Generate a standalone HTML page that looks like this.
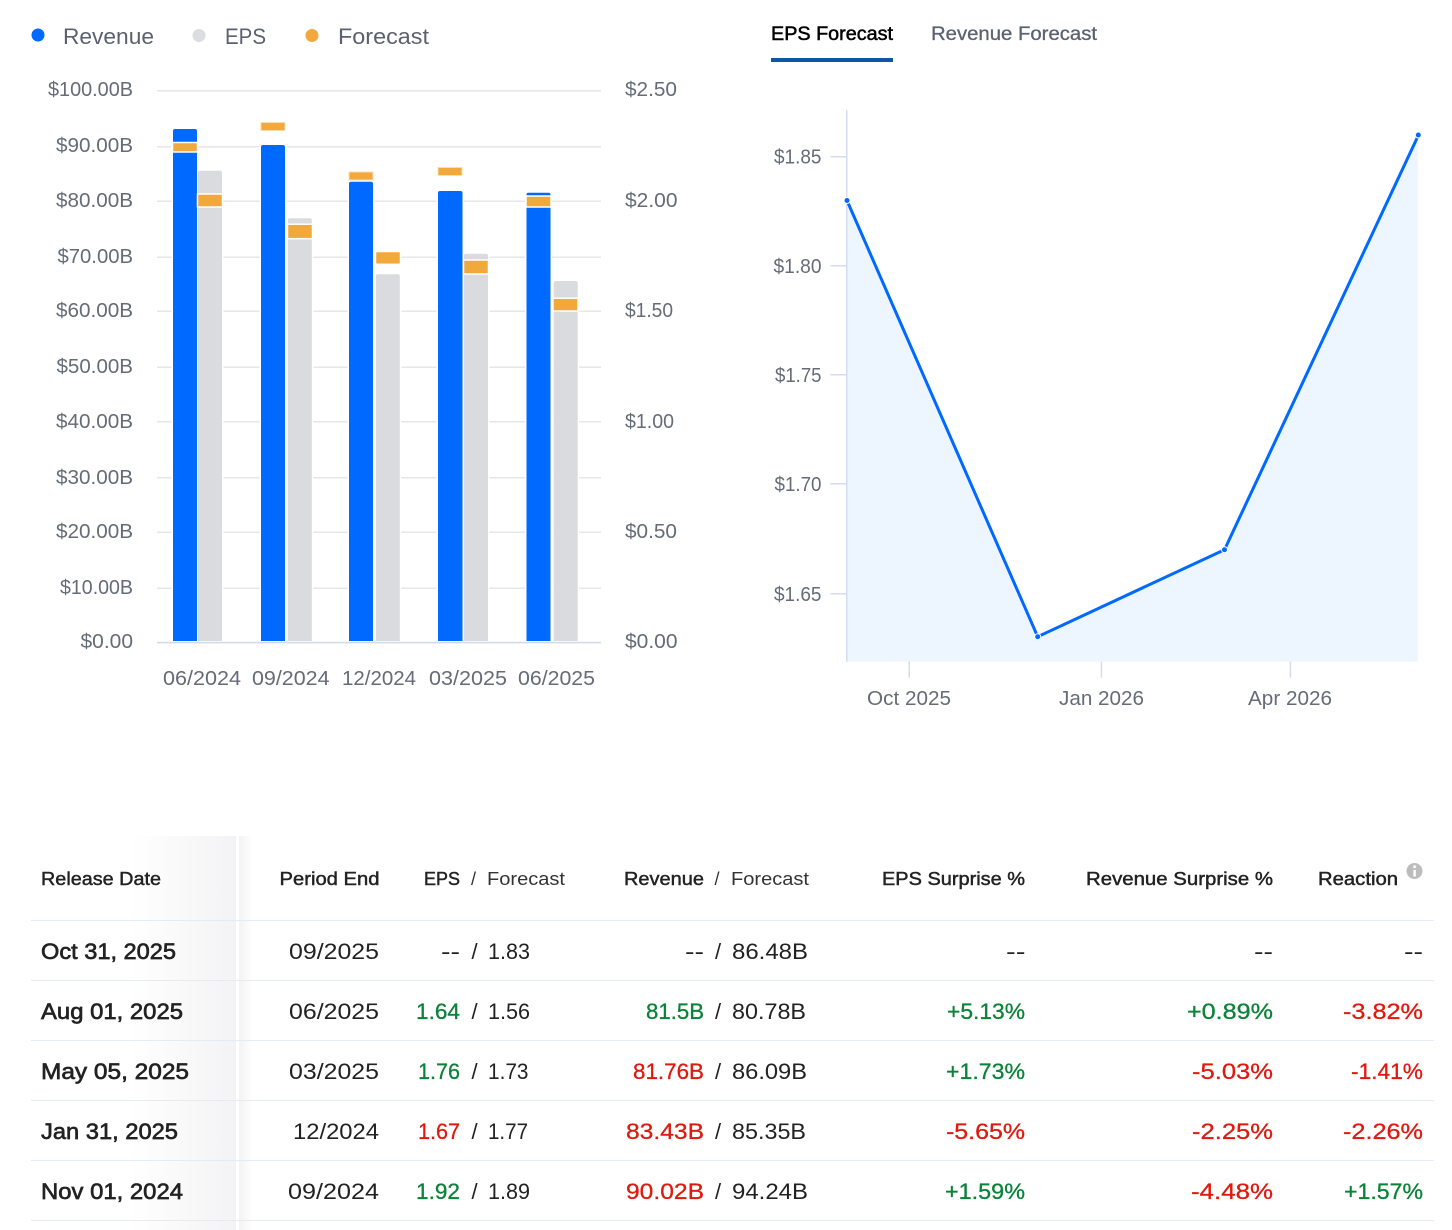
<!DOCTYPE html>
<html><head><meta charset="utf-8"><style>
html,body{margin:0;padding:0;background:#fff}
svg{display:block}
text{font-family:"Liberation Sans",sans-serif}
.a{font-size:20px;fill:#666b78}
.l{font-size:22px;fill:#5b6170}
.h{font-size:18px;fill:#222;stroke:#222;stroke-width:.45}
.hf{font-size:18px;fill:#333}
.d{font-size:22px;fill:#222;stroke:#222;stroke-width:.65}
.n{font-size:22px;fill:#222}
.g{font-size:22px;fill:#0a8238;stroke:#0a8238;stroke-width:.3}
.r{font-size:22px;fill:#e0190f;stroke:#e0190f;stroke-width:.3}
</style></head><body>
<svg width="1452" height="1230" viewBox="0 0 1452 1230" xmlns="http://www.w3.org/2000/svg">
<defs>
<linearGradient id="s1" x1="0" x2="1" y1="0" y2="0"><stop offset="0" stop-color="#fff"/><stop offset="1" stop-color="#f3f3f5"/></linearGradient>
<linearGradient id="s2" x1="0" x2="1" y1="0" y2="0"><stop offset="0" stop-color="#f3f3f5"/><stop offset="1" stop-color="#fff"/></linearGradient>
</defs>
<rect width="1452" height="1230" fill="#fff"/>

<!-- legend -->
<circle cx="38" cy="35" r="6.5" fill="#0069ff"/>
<text class="l" x="63" y="44" textLength="91" lengthAdjust="spacingAndGlyphs">Revenue</text>
<circle cx="199" cy="35.500" r="6.500" fill="#dcdde1"/>
<text class="l" x="225" y="44" textLength="41" lengthAdjust="spacingAndGlyphs">EPS</text>
<circle cx="312" cy="35.500" r="6.500" fill="#f2a93b"/>
<text class="l" x="338" y="44" textLength="91" lengthAdjust="spacingAndGlyphs">Forecast</text>

<!-- grid -->
<g fill="#e7e7e9">
<rect x="157" y="90" width="444" height="1.500"/>
<rect x="157" y="146" width="444" height="1.500"/>
<rect x="157" y="200.500" width="444" height="1.500"/>
<rect x="157" y="256.500" width="444" height="1.500"/>
<rect x="157" y="310.500" width="444" height="1.500"/>
<rect x="157" y="366.500" width="444" height="1.500"/>
<rect x="157" y="421" width="444" height="1.500"/>
<rect x="157" y="477" width="444" height="1.500"/>
<rect x="157" y="531.500" width="444" height="1.500"/>
<rect x="157" y="587.500" width="444" height="1.500"/>
</g>
<rect x="157" y="641.800" width="444" height="1.600" fill="#d0d9ee"/>

<!-- halos -->
<g fill="#fff">
<rect x="171.500" y="127.500" width="27" height="514"/>
<rect x="196.500" y="169" width="27" height="472.500"/>
<rect x="259.500" y="143.500" width="27" height="498"/>
<rect x="286.300" y="216.800" width="27" height="424.700"/>
<rect x="347.500" y="180" width="27" height="461.500"/>
<rect x="374.300" y="250" width="27" height="391.500"/>
<rect x="436.500" y="189.500" width="27.500" height="452"/>
<rect x="462.500" y="252" width="27" height="389.500"/>
<rect x="525" y="191" width="27" height="450.500"/>
<rect x="552.200" y="279.500" width="27" height="362"/>
</g>
<!-- blue bars -->
<g fill="#0069ff">
<path d="M173 641V131a2 2 0 0 1 2-2h20a2 2 0 0 1 2 2V641z"/>
<path d="M261 641V147a2 2 0 0 1 2-2h20a2 2 0 0 1 2 2V641z"/>
<path d="M349 641V183.700a2 2 0 0 1 2-2h20a2 2 0 0 1 2 2V641z"/>
<path d="M438 641V193a2 2 0 0 1 2-2h20.500a2 2 0 0 1 2 2V641z"/>
<path d="M526.500 641V194.700a2 2 0 0 1 2-2h20a2 2 0 0 1 2 2V641z"/>
</g>
<!-- gray bars -->
<g fill="#dadbdf">
<path d="M198 641V172.700a2 2 0 0 1 2-2h20a2 2 0 0 1 2 2V641z"/>
<path d="M287.800 641V220.300a2 2 0 0 1 2-2h20a2 2 0 0 1 2 2V641z"/>
<path d="M375.800 641V276.300a2 2 0 0 1 2-2h20a2 2 0 0 1 2 2V641z"/>
<path d="M464 641V255.700a2 2 0 0 1 2-2h20a2 2 0 0 1 2 2V641z"/>
<path d="M553.700 641V283a2 2 0 0 1 2-2h20a2 2 0 0 1 2 2V641z"/>
</g>
<!-- forecast -->
<g fill="#f2a93b" stroke="#fff" stroke-width="1.500">
<rect x="172.500" y="142.500" width="25" height="9.500"/>
<rect x="197.500" y="194" width="25" height="13"/>
<rect x="287.500" y="224.200" width="25" height="14.500"/>
<rect x="375.500" y="251.500" width="25" height="12.800"/>
<rect x="463.500" y="260" width="25" height="14"/>
<rect x="526" y="196" width="25" height="11"/>
<rect x="553" y="298.200" width="25" height="12.800"/>
</g>
<g fill="#f2a93b" stroke="#fbdcae" stroke-width="1">
<rect x="261" y="122.500" width="24" height="8"/>
<rect x="349" y="172" width="24" height="8"/>
<rect x="438" y="167.500" width="24" height="8"/>
</g>

<!-- left axis -->
<text class="a" x="48" y="96" textLength="85" lengthAdjust="spacingAndGlyphs">$100.00B</text>
<text class="a" x="56" y="152" textLength="77" lengthAdjust="spacingAndGlyphs">$90.00B</text>
<text class="a" x="56" y="207" textLength="77" lengthAdjust="spacingAndGlyphs">$80.00B</text>
<text class="a" x="57.500" y="263" textLength="75.500" lengthAdjust="spacingAndGlyphs">$70.00B</text>
<text class="a" x="56" y="317" textLength="77" lengthAdjust="spacingAndGlyphs">$60.00B</text>
<text class="a" x="56.500" y="373" textLength="76.500" lengthAdjust="spacingAndGlyphs">$50.00B</text>
<text class="a" x="56" y="428" textLength="77" lengthAdjust="spacingAndGlyphs">$40.00B</text>
<text class="a" x="56" y="484" textLength="77" lengthAdjust="spacingAndGlyphs">$30.00B</text>
<text class="a" x="56" y="538" textLength="77" lengthAdjust="spacingAndGlyphs">$20.00B</text>
<text class="a" x="60" y="594" textLength="73" lengthAdjust="spacingAndGlyphs">$10.00B</text>
<text class="a" x="80.500" y="648" textLength="52.500" lengthAdjust="spacingAndGlyphs">$0.00</text>
<!-- right axis -->
<text class="a" x="625" y="96" textLength="52" lengthAdjust="spacingAndGlyphs">$2.50</text>
<text class="a" x="625" y="207" textLength="52.500" lengthAdjust="spacingAndGlyphs">$2.00</text>
<text class="a" x="625" y="317" textLength="48" lengthAdjust="spacingAndGlyphs">$1.50</text>
<text class="a" x="625" y="428" textLength="49" lengthAdjust="spacingAndGlyphs">$1.00</text>
<text class="a" x="625" y="538" textLength="52" lengthAdjust="spacingAndGlyphs">$0.50</text>
<text class="a" x="625" y="648" textLength="52.500" lengthAdjust="spacingAndGlyphs">$0.00</text>
<!-- x labels -->
<text class="a" x="163" y="685" textLength="78" lengthAdjust="spacingAndGlyphs">06/2024</text>
<text class="a" x="252" y="685" textLength="77.500" lengthAdjust="spacingAndGlyphs">09/2024</text>
<text class="a" x="342" y="685" textLength="74" lengthAdjust="spacingAndGlyphs">12/2024</text>
<text class="a" x="429" y="685" textLength="78" lengthAdjust="spacingAndGlyphs">03/2025</text>
<text class="a" x="518" y="685" textLength="77" lengthAdjust="spacingAndGlyphs">06/2025</text>

<!-- tabs -->
<text x="771" y="40" font-size="19" fill="#000" stroke="#000" stroke-width=".5" textLength="122" lengthAdjust="spacingAndGlyphs">EPS Forecast</text>
<text x="931" y="40" font-size="19" fill="#5b6170" stroke="#5b6170" stroke-width=".3" textLength="166" lengthAdjust="spacingAndGlyphs">Revenue Forecast</text>
<rect x="771" y="58" width="122" height="4" fill="#0e57a6"/>

<!-- forecast chart -->
<path d="M846.500 200.500L1037.700 636.700L1224.500 549.700L1417.700 135V661.700H846.500Z" fill="#edf5ff"/>
<rect x="846" y="110" width="1.500" height="551.700" fill="#d5dcee"/>
<g fill="#d5dcee">
<rect x="830.500" y="156" width="16" height="1.500"/>
<rect x="830.500" y="265" width="16" height="1.500"/>
<rect x="830.500" y="374" width="16" height="1.500"/>
<rect x="830.500" y="483" width="16" height="1.500"/>
<rect x="830.500" y="593" width="16" height="1.500"/>
<rect x="908.500" y="661.700" width="1.500" height="16"/>
<rect x="1100.700" y="661.700" width="1.500" height="16"/>
<rect x="1289.700" y="661.700" width="1.500" height="16"/>
</g>
<path d="M847 200.500L1037.700 636.700L1224.500 549.700L1418.500 135" fill="none" stroke="#0069ff" stroke-width="3" stroke-linejoin="miter"/>
<g fill="#0069ff" stroke="#fff" stroke-width="1">
<circle cx="847" cy="200.500" r="3"/>
<circle cx="1037.700" cy="636.700" r="3"/>
<circle cx="1224.500" cy="549.700" r="3"/>
<circle cx="1418.300" cy="135" r="3"/>
</g>
<text class="a" x="774" y="163.500" textLength="47.500" lengthAdjust="spacingAndGlyphs">$1.85</text>
<text class="a" x="773.500" y="273" textLength="48" lengthAdjust="spacingAndGlyphs">$1.80</text>
<text class="a" x="775" y="382" textLength="46.500" lengthAdjust="spacingAndGlyphs">$1.75</text>
<text class="a" x="774.500" y="491" textLength="47" lengthAdjust="spacingAndGlyphs">$1.70</text>
<text class="a" x="774" y="601" textLength="47.500" lengthAdjust="spacingAndGlyphs">$1.65</text>
<text class="a" x="867" y="705" textLength="84" lengthAdjust="spacingAndGlyphs">Oct 2025</text>
<text class="a" x="1059" y="705" textLength="85" lengthAdjust="spacingAndGlyphs">Jan 2026</text>
<text class="a" x="1248" y="705" textLength="84" lengthAdjust="spacingAndGlyphs">Apr 2026</text>

<!-- table sticky shading -->
<rect x="130" y="836" width="106" height="394" fill="url(#s1)"/>
<rect x="239" y="836" width="14" height="394" fill="url(#s2)"/>
<g fill="#e5ebf4">
<rect x="31" y="920" width="1403" height="1"/>
<rect x="31" y="980" width="1403" height="1"/>
<rect x="31" y="1040" width="1403" height="1"/>
<rect x="31" y="1100" width="1403" height="1"/>
<rect x="31" y="1160" width="1403" height="1"/>
<rect x="31" y="1220" width="1403" height="1"/>
</g>

<!-- table header -->
<text class="h" x="41" y="885" textLength="120" lengthAdjust="spacingAndGlyphs">Release Date</text>
<text class="h" x="279.500" y="885" textLength="100" lengthAdjust="spacingAndGlyphs">Period End</text>
<text class="h" x="424" y="885" textLength="36" lengthAdjust="spacingAndGlyphs">EPS</text>
<text class="hf" x="471" y="885">/</text>
<text class="hf" x="487" y="885" textLength="78" lengthAdjust="spacingAndGlyphs">Forecast</text>
<text class="h" x="624" y="885" textLength="80" lengthAdjust="spacingAndGlyphs">Revenue</text>
<text class="hf" x="714.500" y="885">/</text>
<text class="hf" x="731" y="885" textLength="78" lengthAdjust="spacingAndGlyphs">Forecast</text>
<text class="h" x="882" y="885" textLength="143" lengthAdjust="spacingAndGlyphs">EPS Surprise %</text>
<text class="h" x="1086" y="885" textLength="187" lengthAdjust="spacingAndGlyphs">Revenue Surprise %</text>
<text class="h" x="1318" y="885" textLength="80" lengthAdjust="spacingAndGlyphs">Reaction</text>
<circle cx="1414.500" cy="871" r="8" fill="#bdbdbd"/>
<rect x="1413.300" y="870" width="2.600" height="6.500" fill="#fff"/>
<circle cx="1414.600" cy="866.800" r="1.500" fill="#fff"/>

<!-- row 1 -->
<text class="d" x="41" y="959" textLength="135" lengthAdjust="spacingAndGlyphs">Oct 31, 2025</text>
<text class="n" x="289" y="959" textLength="90" lengthAdjust="spacingAndGlyphs">09/2025</text>
<text class="n" x="441" y="959" textLength="19" lengthAdjust="spacingAndGlyphs">--</text>
<text class="n" x="471.500" y="959">/</text>
<text class="n" x="488" y="959" textLength="42" lengthAdjust="spacingAndGlyphs">1.83</text>
<text class="n" x="685" y="959" textLength="19" lengthAdjust="spacingAndGlyphs">--</text>
<text class="n" x="715" y="959">/</text>
<text class="n" x="732" y="959" textLength="76" lengthAdjust="spacingAndGlyphs">86.48B</text>
<text class="n" x="1006" y="959" textLength="19.500" lengthAdjust="spacingAndGlyphs">--</text>
<text class="n" x="1254" y="959" textLength="19" lengthAdjust="spacingAndGlyphs">--</text>
<text class="n" x="1404" y="959" textLength="19" lengthAdjust="spacingAndGlyphs">--</text>

<!-- row 2 -->
<text class="d" x="41" y="1019" textLength="142" lengthAdjust="spacingAndGlyphs">Aug 01, 2025</text>
<text class="n" x="289" y="1019" textLength="90" lengthAdjust="spacingAndGlyphs">06/2025</text>
<text class="g" x="416" y="1019" textLength="44" lengthAdjust="spacingAndGlyphs">1.64</text>
<text class="n" x="471.500" y="1019">/</text>
<text class="n" x="488" y="1019" textLength="42" lengthAdjust="spacingAndGlyphs">1.56</text>
<text class="g" x="646" y="1019" textLength="58" lengthAdjust="spacingAndGlyphs">81.5B</text>
<text class="n" x="715" y="1019">/</text>
<text class="n" x="732" y="1019" textLength="74" lengthAdjust="spacingAndGlyphs">80.78B</text>
<text class="g" x="947" y="1019" textLength="78" lengthAdjust="spacingAndGlyphs">+5.13%</text>
<text class="g" x="1187" y="1019" textLength="86" lengthAdjust="spacingAndGlyphs">+0.89%</text>
<text class="r" x="1343" y="1019" textLength="80" lengthAdjust="spacingAndGlyphs">-3.82%</text>

<!-- row 3 -->
<text class="d" x="41" y="1079" textLength="148" lengthAdjust="spacingAndGlyphs">May 05, 2025</text>
<text class="n" x="289" y="1079" textLength="90" lengthAdjust="spacingAndGlyphs">03/2025</text>
<text class="g" x="418" y="1079" textLength="42" lengthAdjust="spacingAndGlyphs">1.76</text>
<text class="n" x="471.500" y="1079">/</text>
<text class="n" x="488" y="1079" textLength="40.500" lengthAdjust="spacingAndGlyphs">1.73</text>
<text class="r" x="633" y="1079" textLength="71" lengthAdjust="spacingAndGlyphs">81.76B</text>
<text class="n" x="715" y="1079">/</text>
<text class="n" x="732" y="1079" textLength="75" lengthAdjust="spacingAndGlyphs">86.09B</text>
<text class="g" x="946" y="1079" textLength="79" lengthAdjust="spacingAndGlyphs">+1.73%</text>
<text class="r" x="1192" y="1079" textLength="81" lengthAdjust="spacingAndGlyphs">-5.03%</text>
<text class="r" x="1351" y="1079" textLength="72" lengthAdjust="spacingAndGlyphs">-1.41%</text>

<!-- row 4 -->
<text class="d" x="41" y="1139" textLength="137" lengthAdjust="spacingAndGlyphs">Jan 31, 2025</text>
<text class="n" x="293" y="1139" textLength="86" lengthAdjust="spacingAndGlyphs">12/2024</text>
<text class="r" x="418" y="1139" textLength="42" lengthAdjust="spacingAndGlyphs">1.67</text>
<text class="n" x="471.500" y="1139">/</text>
<text class="n" x="488" y="1139" textLength="40" lengthAdjust="spacingAndGlyphs">1.77</text>
<text class="r" x="626" y="1139" textLength="78" lengthAdjust="spacingAndGlyphs">83.43B</text>
<text class="n" x="715" y="1139">/</text>
<text class="n" x="732" y="1139" textLength="74" lengthAdjust="spacingAndGlyphs">85.35B</text>
<text class="r" x="946" y="1139" textLength="79" lengthAdjust="spacingAndGlyphs">-5.65%</text>
<text class="r" x="1192" y="1139" textLength="81" lengthAdjust="spacingAndGlyphs">-2.25%</text>
<text class="r" x="1343" y="1139" textLength="80" lengthAdjust="spacingAndGlyphs">-2.26%</text>

<!-- row 5 -->
<text class="d" x="41" y="1199" textLength="142" lengthAdjust="spacingAndGlyphs">Nov 01, 2024</text>
<text class="n" x="288" y="1199" textLength="91" lengthAdjust="spacingAndGlyphs">09/2024</text>
<text class="g" x="416" y="1199" textLength="44" lengthAdjust="spacingAndGlyphs">1.92</text>
<text class="n" x="471.500" y="1199">/</text>
<text class="n" x="488" y="1199" textLength="42" lengthAdjust="spacingAndGlyphs">1.89</text>
<text class="r" x="626" y="1199" textLength="78" lengthAdjust="spacingAndGlyphs">90.02B</text>
<text class="n" x="715" y="1199">/</text>
<text class="n" x="732" y="1199" textLength="76" lengthAdjust="spacingAndGlyphs">94.24B</text>
<text class="g" x="945" y="1199" textLength="80" lengthAdjust="spacingAndGlyphs">+1.59%</text>
<text class="r" x="1191" y="1199" textLength="82" lengthAdjust="spacingAndGlyphs">-4.48%</text>
<text class="g" x="1344" y="1199" textLength="79" lengthAdjust="spacingAndGlyphs">+1.57%</text>
</svg>
</body></html>
